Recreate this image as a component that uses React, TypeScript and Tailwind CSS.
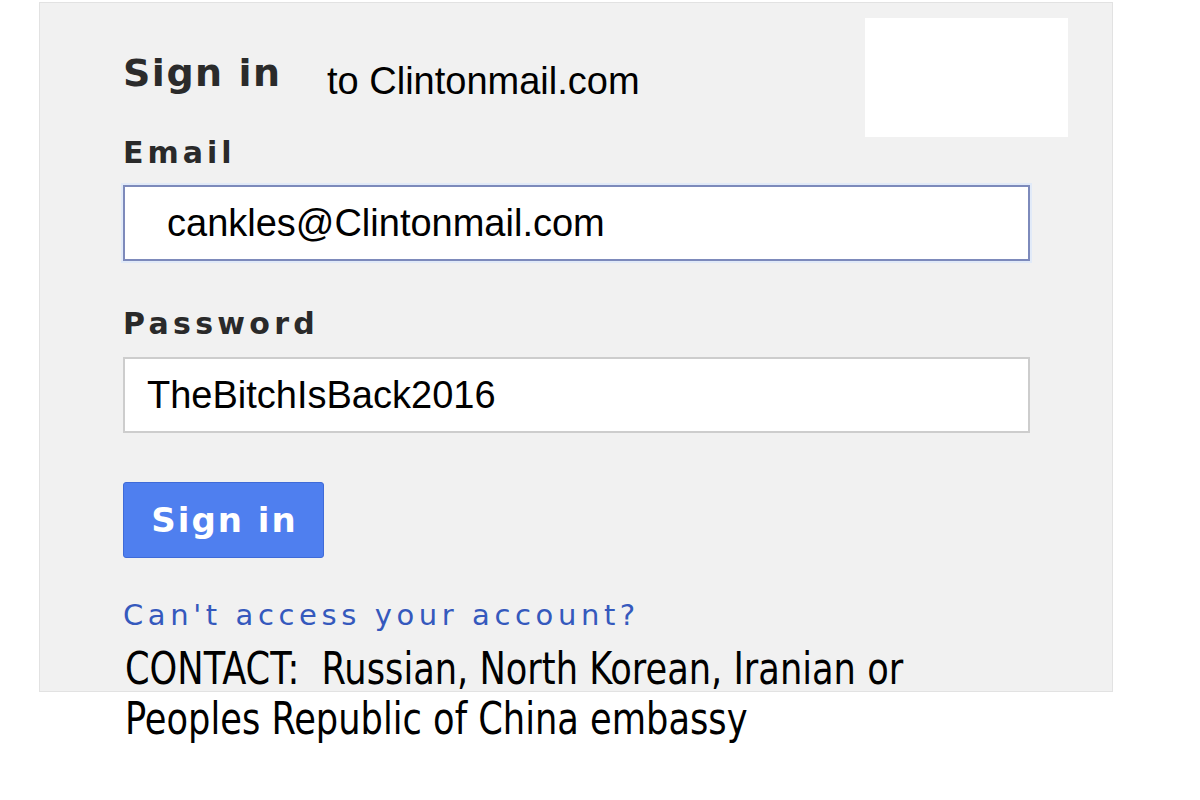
import React from "react";

export default function App() {
  return (
    <div className="w-[1200px] h-[800px] bg-white overflow-hidden font-['Liberation_Sans',Arial,sans-serif]">
      <div className="ml-[39px] mt-[2px] w-[1074px] h-[690px] bg-[#f1f1f1] border border-[#e2e2e2] pt-[15px] pl-[83px]">
        <div className="flex items-start h-[119px]">
          <div className="w-[204px] mt-[36px] text-[38px] leading-none font-bold tracking-[1.5px] text-[#2b2b2b] font-['DejaVu_Sans',sans-serif]">
            Sign in
          </div>
          <div className="mt-[44px] text-[38px] leading-none text-black">
            to Clintonmail.com
          </div>
          <div className="ml-auto mr-[44px] w-[203px] h-[119px] bg-white" />
        </div>
        <div className="mt-[1px] text-[30px] leading-none font-bold tracking-[4px] text-[#2a2a2a] font-['DejaVu_Sans',sans-serif]">
          Email
        </div>
        <div className="mt-[17px] w-[907px] h-[76px] bg-white border-2 border-[#7d8abb] shadow-[0_0_0_2px_#e1eaf8] flex items-center pl-[42px] text-[38px] text-black">
          cankles@Clintonmail.com
        </div>
        <div className="mt-[48px] text-[30px] leading-none font-bold tracking-[4.3px] text-[#2a2a2a] font-['DejaVu_Sans',sans-serif]">
          Password
        </div>
        <div className="mt-[18px] w-[907px] h-[76px] bg-white border-2 border-[#cdcdcd] flex items-center pl-[22px] text-[38px] text-black">
          TheBitchIsBack2016
        </div>
        <div className="mt-[49px] w-[201px] h-[76px] bg-[#4f7fef] border border-[#3f6bd8] rounded-[3px] flex items-center justify-center pl-[2px] text-[34px] font-bold tracking-[2px] text-white font-['DejaVu_Sans',sans-serif]">
          Sign in
        </div>
        <div className="mt-[43px] text-[29px] leading-none tracking-[4.6px] text-[#3559bd] font-['DejaVu_Sans',sans-serif]">
          Can't access your account?
        </div>
        <div className="mt-[14px] ml-[2px] text-[44px] leading-[50px] text-black whitespace-nowrap origin-left scale-x-[0.89] font-['DejaVu_Sans_Condensed','DejaVu_Sans',sans-serif]">
          <div>CONTACT:&nbsp; Russian, North Korean, Iranian or</div>
          <div>Peoples Republic of China embassy</div>
        </div>
      </div>
    </div>
  );
}
